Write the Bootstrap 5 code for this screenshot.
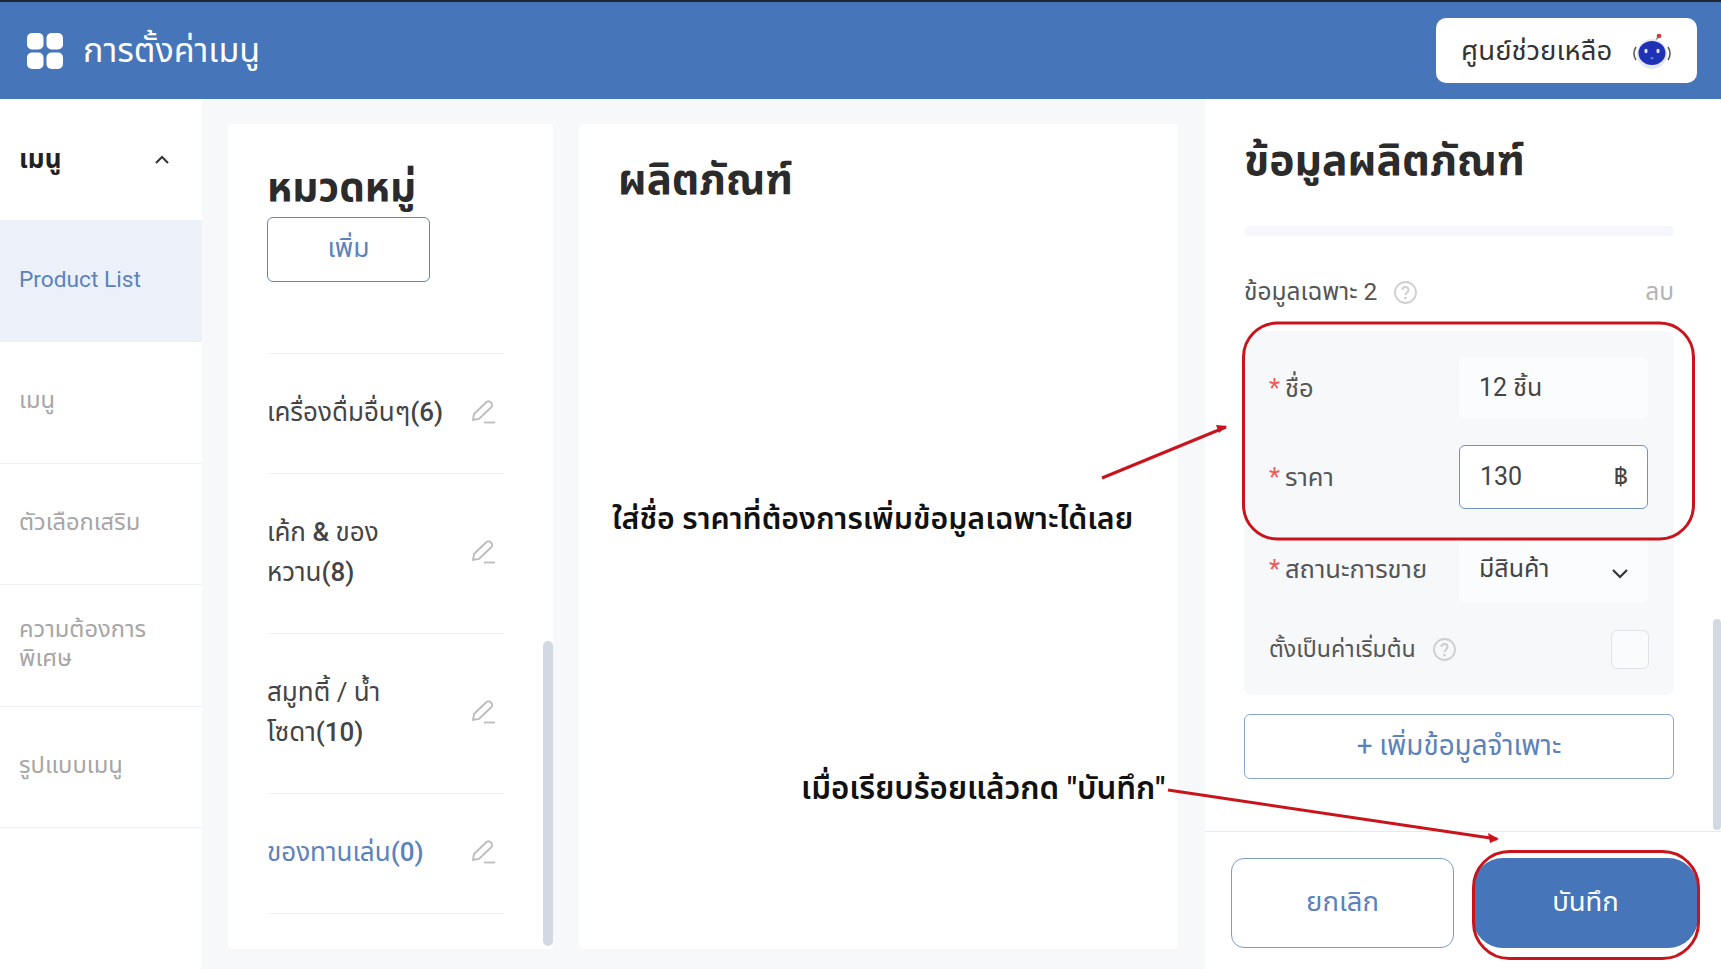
<!DOCTYPE html>
<html lang="th">
<head>
<meta charset="utf-8">
<title>การตั้งค่าเมนู</title>
<link rel="stylesheet" href="https://cdn.jsdelivr.net/npm/bootstrap@5.3.0/dist/css/bootstrap.min.css">
<style>
html,body{height:969px;overflow:hidden}
body{font-family:Roboto,"Noto Sans","Noto Sans Thai",sans-serif;color:#333;background:#fff;position:relative}
.topline{height:2px;background:#1f2533}
.appbar{height:97px;background:#4675b9;padding:0 24px 0 27px}
.appbar-title{font-size:34px;color:#fff;margin-left:20px}
.help-btn{width:261px;height:65px;background:#fff;border-radius:10px;font-size:27.500px;color:#333;padding:0 26px 0 25px}
.workspace{height:870px}
.side{width:202px;flex:none;background:#fff;box-shadow:1px 0 0 #eef1f5}
.side-head{height:121px;padding:0 32px 0 19px;font-size:26px;font-weight:700;color:#222}
.side-item{height:121.500px;padding:0 19px 3px;font-size:23.700px;line-height:29px;color:#a6a6a6;border-bottom:1px solid #eef0f4}
.side-item.on{height:122px;background:#ecf1f9;color:#5b82bd;font-size:22.700px;border-bottom:0}
.canvas{width:1003px;flex:none;background:#f6f8fa;padding:25px 27px 20px 26px;gap:26px}
.panel{background:#fff;height:825px;border-radius:4px}
.cat-panel{width:325px;flex:none;padding:35px 0 0 39px;position:relative;overflow:hidden}
.prod-panel{width:599px;flex:none;padding:28px 39px}
.head-title{font-size:40.500px;font-weight:700;color:#2b2b2b;line-height:56px;margin:0 0 2px}
.prod-panel .head-title{font-size:42px}
.add-cat{width:163px;height:65px;border:1px solid #5e86bf;border-radius:6px;background:#fff;color:#5b82bd;font-size:26.500px;padding:0 0 3px}
.cat-list{width:237px;margin-top:71px;border-top:1px solid #eff1f4}
.cat-row{padding:38px 8px 41px 0;font-size:26px;line-height:40px;color:#444;border-bottom:1px solid #eff1f4}
.cat-row .cat-name{width:190px}
.cat-count{font-weight:500}
.cat-row.on .cat-name{color:#5b82bd}
.thumb{position:absolute;right:0;top:517px;width:10px;height:305px;border-radius:5px;background:#d3d9e2}
.info{width:516px;flex:none;background:#fff;position:relative;height:870px}
.info-body{height:732px;padding:28px 47px 0 39px;position:relative}
.info-title{font-size:42.600px;font-weight:700;color:#2b2b2b;line-height:66px;margin:0}
.strip{height:10px;background:#f5f7fa;border-radius:5px;margin-top:33px}
.sec-row{margin-top:34px;height:44px;font-size:24.500px;color:#555}
.del-link{color:#b5b5b5}
.qmark{width:23px;height:23px;margin-left:17px}
.spec-box{background:#f6f8fa;border-radius:8px;height:364px;margin-top:17px;padding:26px 25px 0 25px}
.spec-row{height:62px;margin-bottom:27px;font-size:25.500px;color:#555}
.spec-row.tail{height:39px;margin-bottom:0;font-size:23.200px}
.spec-row.gap-after{margin-bottom:33px}
.spec-row label{width:190px;flex:none}
.req{color:#ef5b5b;margin-right:5px}
.val{width:189px;height:62px;background:#fbfcfd;border-radius:6px;padding:0 19px 0 20px;color:#444;font-size:25px}
.val.focus{background:#fff;border:1px solid #6f93c4;height:64px}
.val-lift{margin-bottom:6px}
.chev-drop{margin-top:3px}
.check-box{width:38px;height:39px;border:1px solid #dfe3e8;border-radius:6px;background:#fafbfc}
.add-spec{height:65px;border:1px solid #8aa6d0;border-radius:6px;background:#fff;color:#5b82bd;font-size:27.800px;margin-top:19px;padding:0 0 2px}
.info-foot{height:138px;border-top:1px solid #e6e9ee;padding:26px 23px 0 26px;gap:19px}
.foot-btn{height:90px;font-size:27.500px;border-radius:13px;padding:0 0 2px}
.foot-cancel{width:223px;border:1px solid #7e9cc7;background:#fff;color:#5b82bd}
.foot-save{width:225px;border:0;background:#4675b9;color:#fff;border-radius:30px}
.info-thumb{position:absolute;right:0;top:520px;width:8px;height:211px;border-radius:4px;background:#d3d9e2}
.overlay{position:absolute;left:0;top:0;width:1721px;height:969px;pointer-events:none}
.note{position:absolute;font-weight:600;color:#111;white-space:nowrap;line-height:40px}
.note-a{left:612px;top:499px;font-size:30.300px}
.note-b{left:801px;top:769px;font-size:31.300px}
</style>
</head>
<body>
<div class="topline"></div>
<header class="appbar d-flex align-items-center justify-content-between">
  <div class="d-flex align-items-center">
    <svg width="36" height="36" viewBox="0 0 36 36" aria-hidden="true"><g fill="#fff"><rect width="16.500" height="16.500" rx="5"/><rect x="19.500" width="16.500" height="16.500" rx="5"/><rect y="19.500" width="16.500" height="16.500" rx="5"/><rect x="19.500" y="19.500" width="16.500" height="16.500" rx="5"/></g></svg>
    <span class="appbar-title">การตั้งค่าเมนู</span>
  </div>
  <div class="help-btn d-flex align-items-center justify-content-between">
    <span>ศูนย์ช่วยเหลือ</span>
    <svg width="38" height="36" viewBox="0 0 38 36" aria-hidden="true"><line x1="23" y1="7" x2="26" y2="3" stroke="#8a8fa8" stroke-width="1.500"/><circle cx="26" cy="3" r="2.300" fill="#e0343c"/><path d="M3 14c-2.500 4-2.500 9 0 13M35 14c2.500 4 2.500 9 0 13" fill="none" stroke="#555" stroke-width="1.500"/><circle cx="19" cy="21" r="15" fill="#e4e7f2"/><ellipse cx="19" cy="20" rx="13.500" ry="12" fill="#1f32b4"/><ellipse cx="13" cy="18" rx="1.600" ry="2.200" fill="#dfe6ff"/><ellipse cx="25" cy="18" rx="1.600" ry="2.200" fill="#dfe6ff"/><path d="M17 24.500h4l-2 2z" fill="#7fa2ff"/></svg>
  </div>
</header>
<div class="workspace d-flex">
  <nav class="side">
    <div class="side-head d-flex align-items-center justify-content-between">
      <span>เมนู</span>
      <svg width="16" height="10" viewBox="0 0 16 10" aria-hidden="true"><path d="M2 8l6-6 6 6" fill="none" stroke="#333" stroke-width="2"/></svg>
    </div>
    <div class="side-item on d-flex align-items-center">Product List</div>
    <div class="side-item d-flex align-items-center">เมนู</div>
    <div class="side-item d-flex align-items-center">ตัวเลือกเสริม</div>
    <div class="side-item d-flex align-items-center">ความต้องการพิเศษ</div>
    <div class="side-item d-flex align-items-center">รูปแบบเมนู</div>
  </nav>
  <div class="canvas d-flex">
    <section class="panel cat-panel">
      <h2 class="head-title">หมวดหมู่</h2>
      <button class="btn add-cat d-block" type="button">เพิ่ม</button>
      <div class="cat-list">
        <div class="cat-row d-flex align-items-center justify-content-between"><span class="cat-name">เครื่องดื่มอื่นๆ<span class="cat-count">(6)</span></span><svg class="pen" width="25" height="24" viewBox="0 0 25 24" aria-hidden="true"><path d="M2 20l1-6L15 2.500c1.500-1.500 3.500-1.500 5 0s1.500 3.500 0 5L8 19z" fill="none" stroke="#bcbcbc" stroke-width="1.800"/><path d="M13 22.500h11" stroke="#bcbcbc" stroke-width="1.800"/></svg></div>
        <div class="cat-row d-flex align-items-center justify-content-between"><span class="cat-name"><span class="d-block">เค้ก <span class="cat-count">&amp;</span> ของ</span><span class="d-block">หวาน<span class="cat-count">(8)</span></span></span><svg class="pen" width="25" height="24" viewBox="0 0 25 24" aria-hidden="true"><path d="M2 20l1-6L15 2.500c1.500-1.500 3.500-1.500 5 0s1.500 3.500 0 5L8 19z" fill="none" stroke="#bcbcbc" stroke-width="1.800"/><path d="M13 22.500h11" stroke="#bcbcbc" stroke-width="1.800"/></svg></div>
        <div class="cat-row d-flex align-items-center justify-content-between"><span class="cat-name"><span class="d-block">สมูทตี้ / น้ำ</span><span class="d-block">โซดา<span class="cat-count">(10)</span></span></span><svg class="pen" width="25" height="24" viewBox="0 0 25 24" aria-hidden="true"><path d="M2 20l1-6L15 2.500c1.500-1.500 3.500-1.500 5 0s1.500 3.500 0 5L8 19z" fill="none" stroke="#bcbcbc" stroke-width="1.800"/><path d="M13 22.500h11" stroke="#bcbcbc" stroke-width="1.800"/></svg></div>
        <div class="cat-row on d-flex align-items-center justify-content-between"><span class="cat-name">ของทานเล่น<span class="cat-count">(0)</span></span><svg class="pen" width="25" height="24" viewBox="0 0 25 24" aria-hidden="true"><path d="M2 20l1-6L15 2.500c1.500-1.500 3.500-1.500 5 0s1.500 3.500 0 5L8 19z" fill="none" stroke="#bcbcbc" stroke-width="1.800"/><path d="M13 22.500h11" stroke="#bcbcbc" stroke-width="1.800"/></svg></div>
      </div>
      <div class="thumb"></div>
    </section>
    <section class="panel prod-panel">
      <h2 class="head-title">ผลิตภัณฑ์</h2>
    </section>
  </div>
  <aside class="info">
    <div class="info-body">
      <h2 class="info-title">ข้อมูลผลิตภัณฑ์</h2>
      <div class="strip"></div>
      <div class="sec-row d-flex align-items-center">
        <span>ข้อมูลเฉพาะ 2</span>
        <svg class="qmark" viewBox="0 0 23 23" aria-hidden="true"><circle cx="11.500" cy="11.500" r="10.500" fill="none" stroke="#cfcfcf" stroke-width="1.800"/><path d="M8.500 9c0-4 6-4 6 0 0 2.500-3 2.500-3 5" fill="none" stroke="#cfcfcf" stroke-width="2"/><circle cx="11.500" cy="17" r="1.300" fill="#cfcfcf"/></svg>
        <span class="del-link ms-auto">ลบ</span>
      </div>
      <div class="spec-box">
        <div class="spec-row d-flex align-items-center">
          <label><span class="req">*</span>ชื่อ</label>
          <div class="val d-flex align-items-center">12 ชิ้น</div>
        </div>
        <div class="spec-row gap-after d-flex align-items-center">
          <label><span class="req">*</span>ราคา</label>
          <div class="val focus d-flex align-items-center justify-content-between"><span>130</span><span>฿</span></div>
        </div>
        <div class="spec-row d-flex align-items-center">
          <label class="val-lift"><span class="req">*</span>สถานะการขาย</label>
          <div class="val d-flex align-items-center justify-content-between"><span class="val-lift">มีสินค้า</span><svg class="chev-drop" width="18" height="11" viewBox="0 0 18 11" aria-hidden="true"><path d="M2 2l7 7 7-7" fill="none" stroke="#333" stroke-width="2.200"/></svg></div>
        </div>
        <div class="d-flex align-items-center spec-row tail">
          <span>ตั้งเป็นค่าเริ่มต้น</span>
          <svg class="qmark" viewBox="0 0 23 23" aria-hidden="true"><circle cx="11.500" cy="11.500" r="10.500" fill="none" stroke="#cfcfcf" stroke-width="1.800"/><path d="M8.500 9c0-4 6-4 6 0 0 2.500-3 2.500-3 5" fill="none" stroke="#cfcfcf" stroke-width="2"/><circle cx="11.500" cy="17" r="1.300" fill="#cfcfcf"/></svg>
          <span class="check-box ms-auto"></span>
        </div>
      </div>
      <button class="btn add-spec w-100" type="button">+ เพิ่มข้อมูลจำเพาะ</button>
      <div class="info-thumb"></div>
    </div>
    <div class="info-foot d-flex">
      <button class="btn foot-btn foot-cancel" type="button">ยกเลิก</button>
      <button class="btn foot-btn foot-save" type="button">บันทึก</button>
    </div>
  </aside>
</div>
<svg class="overlay" viewBox="0 0 1721 969" aria-hidden="true">
  <g fill="none" stroke="#c9141c" stroke-width="3">
    <rect x="1243.500" y="323" width="450" height="216" rx="34"/>
    <rect x="1473.500" y="851.500" width="225" height="107" rx="36"/>
    <path d="M1102 478L1226 427"/>
    <path d="M1168 790L1497 839"/>
  </g>
  <path d="M1227 426l-11-1 3 8z" fill="#c9141c"/>
  <path d="M1499 839l-11-6 2 10z" fill="#c9141c"/>
</svg>
<div class="note note-a">ใส่ชื่อ ราคาที่ต้องการเพิ่มข้อมูลเฉพาะได้เลย</div>
<div class="note note-b">เมื่อเรียบร้อยแล้วกด "บันทึก"</div>
<script src="https://cdn.jsdelivr.net/npm/bootstrap@5.3.0/dist/js/bootstrap.bundle.min.js"></script>
</body>
</html>
